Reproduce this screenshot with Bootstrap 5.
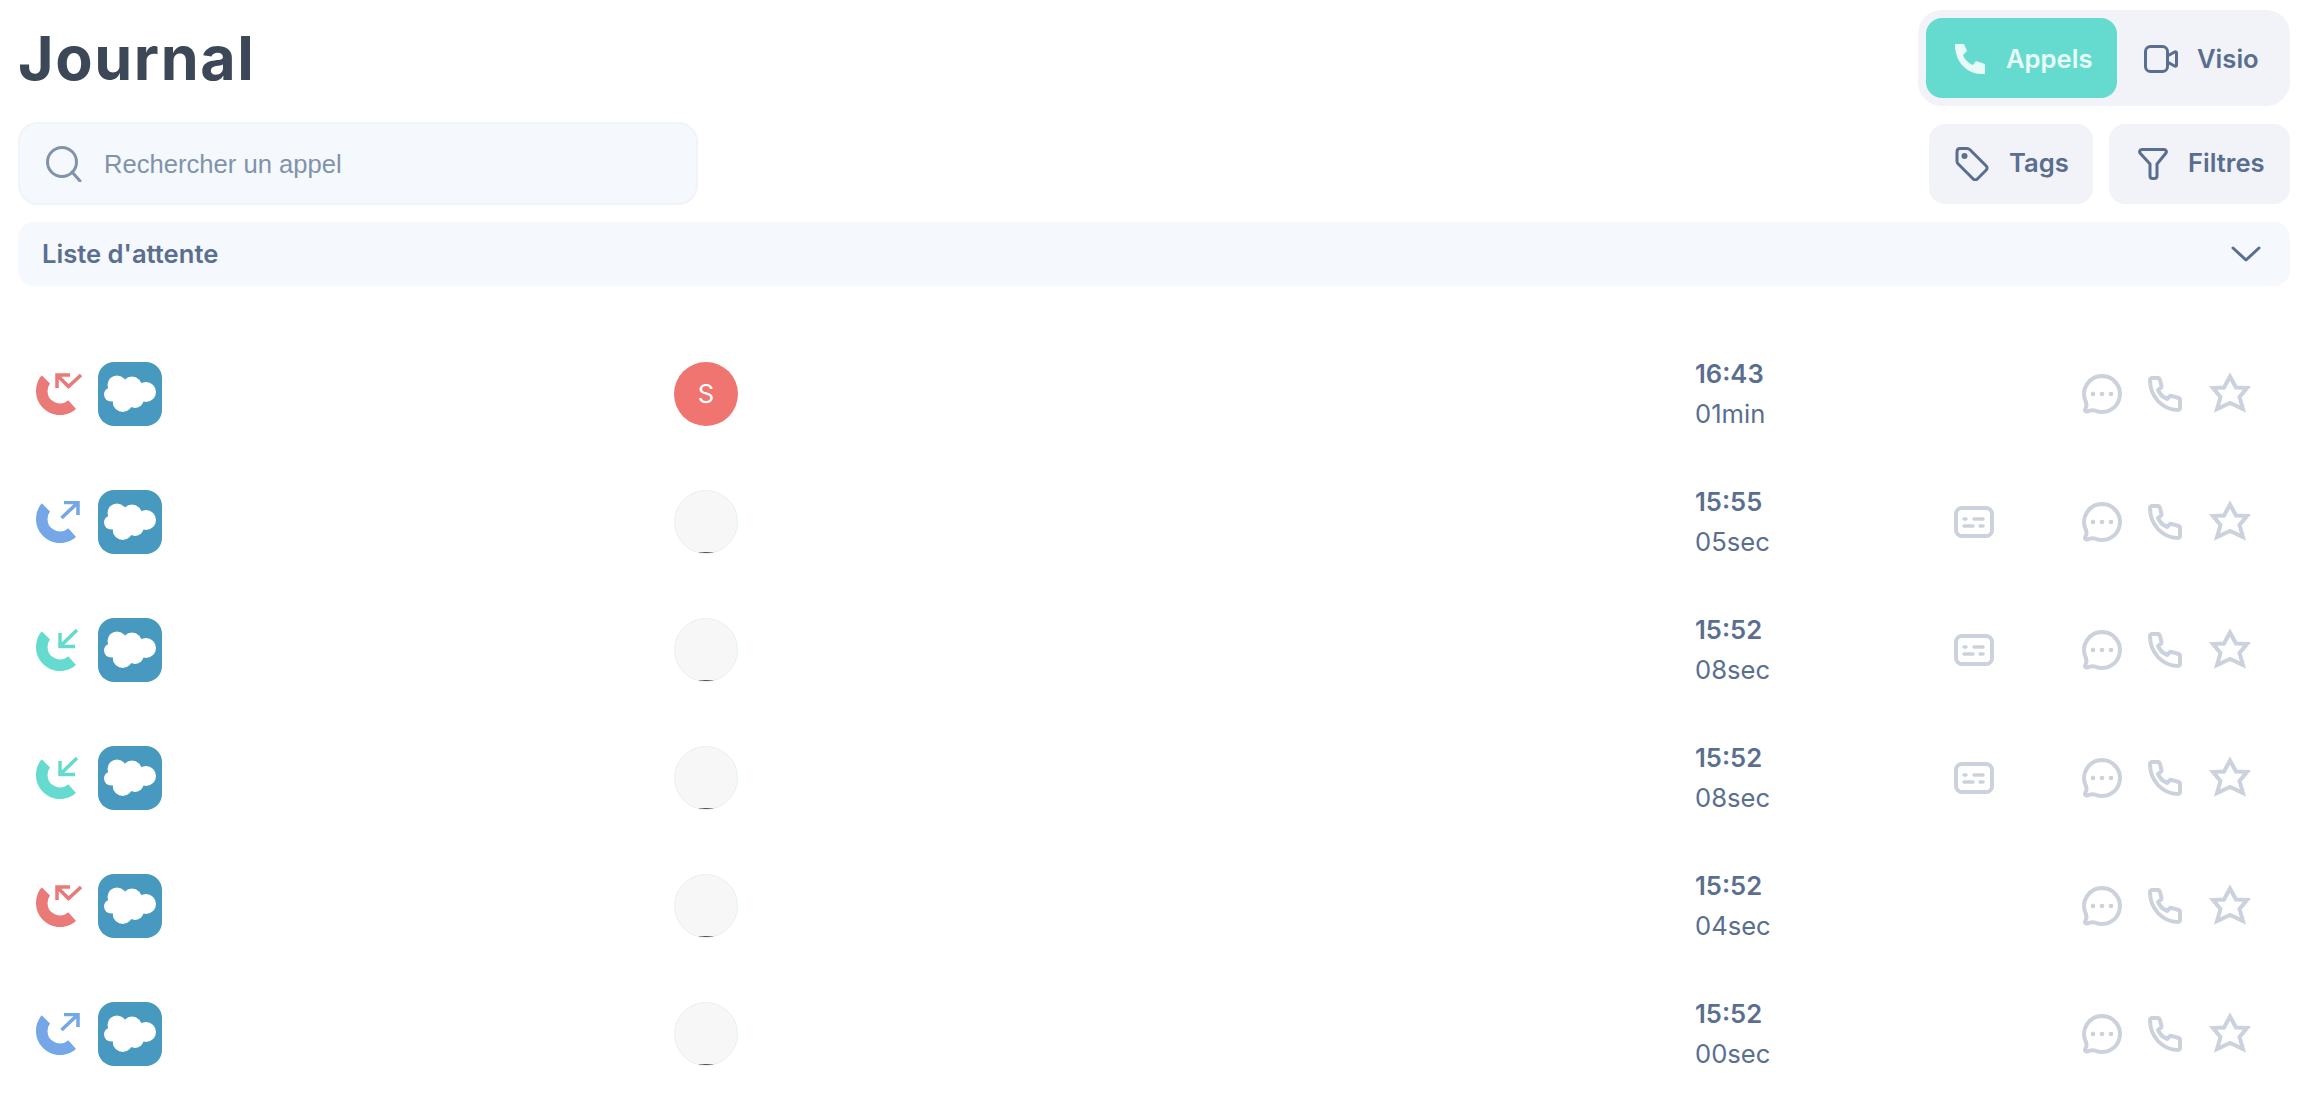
<!DOCTYPE html>
<html lang="fr">
<head>
    <meta charset="UTF-8">
    <title>Journal</title>
    <link href="https://cdn.jsdelivr.net/npm/bootstrap@5.3.0/dist/css/bootstrap.min.css" rel="stylesheet">
    <style>
        body {
            font-family: Inter, "Liberation Sans", sans-serif;
            color: #5a6e8f;
            background: #fff;
        }
        .page-wrap { padding: 10px 24px 0 18px; }
        .page-title {
            font-size: 61px;
            font-weight: 700;
            letter-spacing: 1.6px;
            color: #3c4858;
            margin: 0;
            line-height: 96px;
        }
        .switcher {
            background: #f1f3f9;
            border-radius: 24px;
            padding: 8px;
            height: 96px;
            width: 372px;
        }
        .switch-item {
            height: 80px;
            border-radius: 16px;
            font-size: 25.6px;
            font-weight: 600;
            padding-top: 2px;
        }
        .switch-active { background: #64dbce; color: #e9fbf8; width: 191px; padding-left: 29px; gap: 21px; }
        .switch-idle { padding-left: 27px; gap: 19px; }
        .search-box {
            width: 680px;
            height: 83px;
            background: #f5f8fd;
            border: 2px solid #f0f3f9;
            border-radius: 20px;
            padding-left: 26px;
            gap: 22px;
        }
        .search-text {
            font-family: "Liberation Sans", Arial, sans-serif;
            font-size: 25.6px;
            color: #8093ab;
            padding-top: 2px;
        }
        .tool-btn {
            height: 80px;
            background: #f1f3f9;
            border-radius: 16px;
            font-size: 25.6px;
            font-weight: 600;
            gap: 20px;
        }
        .tool-tags { width: 164px; padding-left: 26px; }
        .tool-filters { width: 181px; padding-left: 29px; }
        .queue-bar {
            height: 64px;
            margin-top: 17px;
            background: #f5f8fd;
            border-radius: 16px;
            padding: 0 29px 0 24px;
            font-size: 25.6px;
            font-weight: 600;
        }
        .call-list { margin-top: 44px; }
        .call-row { height: 128px; }
        .cell-type { width: 656px; padding-left: 18px; gap: 16px; }
        .cell-avatar { width: 1021px; }
        .cell-time { width: 259px; font-size: 25.6px; line-height: 40px; }
        .cell-card { width: 128px; }
        .cell-actions { gap: 26px; }
        .time-top { font-weight: 600; }
        .crm-tile { width: 64px; height: 64px; background: #4899bf; border-radius: 16px; }
        .who {
            width: 64px;
            height: 64px;
            border-radius: 50%;
            font-size: 25.6px;
        }
        .who-red { background: #f07470; color: #fff; }
        .who-blank {
            background: #f7f7f7;
            border: 1px solid #e4f3f0;
            position: relative;
            overflow: hidden;
        }
        .who-blank::after {
            content: "";
            position: absolute;
            left: 22px;
            bottom: 0;
            width: 20px;
            height: 1px;
            background: #4a5054;
        }
        .ico-line { fill: none; stroke: currentColor; stroke-linecap: round; stroke-linejoin: round; }
        .ico-pale { color: #cbd2dd; overflow: visible; }
    </style>
</head>
<body>
    <svg width="0" height="0" class="position-absolute">
        <defs>
            <path id="arc" d="M5.700 2.300A24 24 0 0 0 0 18A24 24 0 0 0 40 36L32.300 27.300A12.500 12.500 0 0 1 11.500 18A12.500 12.500 0 0 1 14 10.500Z"/>
            <g id="cloud" fill="#fff">
                <circle cx="19" cy="23" r="9.500"/>
                <circle cx="34" cy="24.500" r="10"/>
                <circle cx="48" cy="30" r="10"/>
                <circle cx="13" cy="32.500" r="7"/>
                <circle cx="24.700" cy="40" r="10"/>
                <circle cx="37" cy="37" r="9"/>
                <circle cx="28" cy="31" r="11"/>
            </g>
            <g id="act-chat" fill="none" stroke="currentColor" stroke-width="4" stroke-linejoin="round">
                <path d="M20 2A18 18 0 1 1 13 36.600C10 35.500 7 37 5 37.500C3 38 2.500 36 3.500 34.500C5 32 4.500 29 3.500 27A18 18 0 0 1 20 2Z"/>
                <circle cx="11" cy="20" r="2.300" fill="currentColor" stroke="none"/>
                <circle cx="20" cy="20" r="2.300" fill="currentColor" stroke="none"/>
                <circle cx="29" cy="20" r="2.300" fill="currentColor" stroke="none"/>
            </g>
            <path id="act-phone" fill="none" stroke="currentColor" stroke-width="4" stroke-linejoin="round" d="M2 4c0-1 1-2 2-2h6c1 0 1.500.5 2 2l1.500 6c.2 1-.2 1.500-1 2l-2.500 2c2 4 5 7.500 9 9l2.500-2.500c.7-.7 1.300-.9 2-.6l7 2.100c1 .3 1.500 1 1.500 2V32c0 1-1 2-2 2C14 34 2 20 2 4z"/>
            <path id="act-star" fill="none" stroke="currentColor" stroke-width="4" d="M20 4.500L26 15.500L37 16L29.500 25L33 37L20 31L7 37L10.500 25L3 16L14 15.500Z"/>
            <g id="act-card" fill="none" stroke="currentColor" stroke-width="4" stroke-linecap="round">
                <rect x="2" y="2" width="36" height="28" rx="6"/>
                <path stroke-width="3.500" d="M10 13h2M20 13h9M10 20h9M26 20h3"/>
            </g>
        </defs>
    </svg>

    <div class="page-wrap">
        <div class="d-flex justify-content-between align-items-start">
            <h1 class="page-title">Journal</h1>
            <div class="switcher d-flex">
                <div class="switch-item switch-active d-flex align-items-center">
                    <svg width="30" height="30" viewBox="0 0 30 30"><path fill="currentColor" d="M0 1c0-.6.4-1 1-1h8l3 7-4 4c1.500 4 5 8 10 10l3-4 9 3v10h-3C11 30 0 17 0 1z"/></svg>
                    <span>Appels</span>
                </div>
                <div class="switch-item switch-idle d-flex align-items-center">
                    <svg width="34" height="28" viewBox="0 0 34 28" class="ico-line" stroke-width="3"><rect x="1.500" y="1.500" width="22" height="25" rx="5"/><path d="M23.500 11l7-4c1-.5 2 0 2 1v12c0 1-1 1.500-2 1l-7-4z"/></svg>
                    <span>Visio</span>
                </div>
            </div>
        </div>

        <div class="d-flex justify-content-between align-items-center mt-3">
            <div class="search-box d-flex align-items-center">
                <svg width="36" height="36" viewBox="0 0 36 36" class="ico-line flex-shrink-0" style="color:#8093ab" stroke-width="3"><circle cx="16" cy="16" r="14.500"/><path d="M26 26l8 9"/></svg>
                <span class="search-text">Rechercher un appel</span>
            </div>
            <div class="d-flex gap-3">
                <div class="tool-btn tool-tags d-flex align-items-center">
                    <svg width="34" height="34" viewBox="0 0 34 34" class="ico-line flex-shrink-0" stroke-width="3"><path d="M2 5c0-2 1-3.500 3-3.500h7c1 0 2 .3 3 1.300l16 16c1.500 1.500 1.500 3 0 4.500l-8.500 8.500c-1.500 1.500-3 1.500-4.500 0l-15-15C2 16 2 15 2 14z"/><circle cx="9.500" cy="9" r="3" fill="currentColor" stroke="none"/></svg>
                    <span>Tags</span>
                </div>
                <div class="tool-btn tool-filters d-flex align-items-center">
                    <svg width="30" height="32" viewBox="0 0 30 32" class="ico-line flex-shrink-0" stroke-width="3"><path d="M4 1.500h22c2 0 3 2 2 3.500L19 16v12c0 2-1.500 2.500-3 2.500h-1.500c-1.500 0-2.500-1-2.500-2.500V16L2 5c-1-1.500 0-3.500 2-3.500z"/></svg>
                    <span>Filtres</span>
                </div>
            </div>
        </div>

        <div class="queue-bar d-flex justify-content-between align-items-center">
            <span>Liste d'attente</span>
            <svg width="30" height="16" viewBox="0 0 30 16" class="ico-line" stroke-width="3"><path d="M2 2l13 12L28 2"/></svg>
        </div>

        <div class="call-list" id="callList"></div>
    </div>

    <script>
        // kind, avatar letter, time, duration, has transcript
        const calls = [
            ['missed', 'S', '16:43', '01min', false],
            ['out', '', '15:55', '05sec', true],
            ['in', '', '15:52', '08sec', true],
            ['in', '', '15:52', '08sec', true],
            ['missed', '', '15:52', '04sec', false],
            ['out', '', '15:52', '00sec', false]
        ];
        const kinds = {
            missed: ['#e97a78', 'M34 2H21V15M21 2L32.500 13.500L45 2'],
            out: ['#74a6e8', 'M28 1.500H42V14M42 1.500L25.500 17'],
            in: ['#64dbce', 'M24 4V17.500H39M24 17.500L41 1']
        };
        const actions = [['act-chat', 40, 40], ['act-phone', 36, 36], ['act-star', 44, 44]];

        document.getElementById('callList').innerHTML = calls.map(([kind, letter, time, dur, card]) => {
            const [color, arrow] = kinds[kind];
            const who = letter
                ? `<div class="who who-red d-flex align-items-center justify-content-center">${letter}</div>`
                : '<div class="who who-blank"></div>';
            const cardIcon = card ? '<svg width="40" height="32" class="ico-pale"><use href="#act-card"/></svg>' : '';
            const acts = actions.map(([id, w, h]) => `<svg width="${w}" height="${h}" class="ico-pale"><use href="#${id}"/></svg>`).join('');
            return `<div class="call-row d-flex align-items-center">
                <div class="cell-type d-flex align-items-center">
                    <svg width="46" height="42" viewBox="0 0 46 42" style="color:${color}">
                        <use href="#arc" fill="currentColor"/>
                        <path d="${arrow}" fill="none" stroke="currentColor" stroke-width="3.500"/>
                    </svg>
                    <div class="crm-tile">
                        <svg width="64" height="64" viewBox="0 0 64 64"><use href="#cloud"/></svg>
                    </div>
                </div>
                <div class="cell-avatar">${who}</div>
                <div class="cell-time"><div class="time-top">${time}</div><div>${dur}</div></div>
                <div class="cell-card d-flex align-items-center">${cardIcon}</div>
                <div class="cell-actions d-flex align-items-center">${acts}</div>
            </div>`;
        }).join('');
    </script>
    <script src="https://cdn.jsdelivr.net/npm/bootstrap@5.3.0/dist/js/bootstrap.bundle.min.js"></script>
</body>
</html>
